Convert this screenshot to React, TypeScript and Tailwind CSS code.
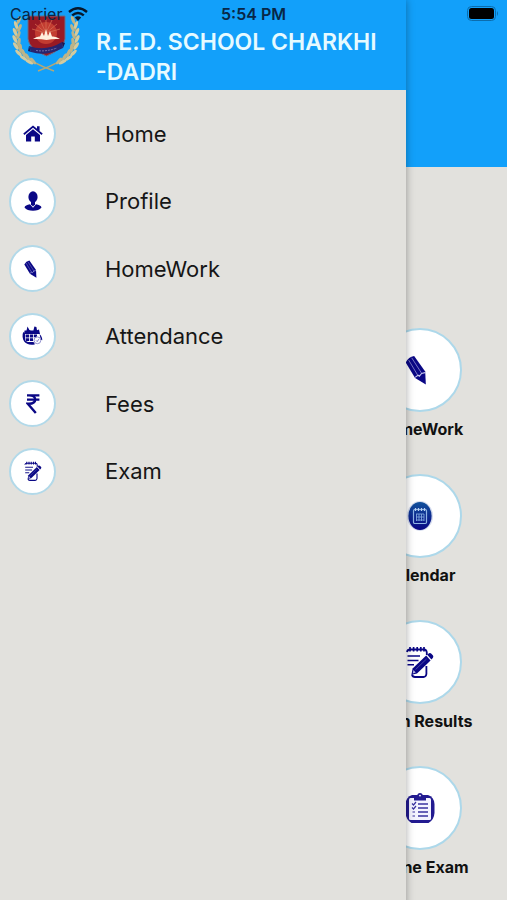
import type { ReactNode } from "react";

const NAVY = "#0a0785";

function HomeIcon() {
  return (
    <svg viewBox="0 0 20 17" className="h-[17px] w-5" fill={NAVY} aria-hidden="true">
      <path d="M10 0.5 L0.3 8.6 L1.4 9.9 L10 2.8 L18.6 9.9 L19.7 8.6 L16.6 6 V1.2 H14 V3.8 Z" />
      <path d="M10 4.2 L3 10 V16.5 H8.2 V11.5 H11.8 V16.5 H17 V10 Z" />
    </svg>
  );
}

function ProfileIcon() {
  return (
    <svg viewBox="0 0 18 20" className="h-5 w-[18px]" fill={NAVY} aria-hidden="true">
      <ellipse cx="9" cy="6" rx="4.6" ry="5.8" />
      <path d="M7 10 H11 V13.4 L9 15.4 L7 13.4 Z" />
      <path d="M6 13.3 L9 16.7 L12 13.3 C15 14 17.2 14.8 17.5 16.6 C15.8 18.8 12.8 19.8 9 19.8 C5.2 19.8 2.2 18.8 0.5 16.6 C0.8 14.8 3 14 6 13.3 Z" />
    </svg>
  );
}

function PencilIcon({ className }: { className: string }) {
  return (
    <svg viewBox="0 0 22 32" className={className} aria-hidden="true">
      <path d="M0 8 Q3 2 9 1 L20.8 17.6 L21.5 31.5 L10 24.6 Z" fill={NAVY} />
      <path d="M3.2 5.4 L13.2 22.2 M6.4 3 L17.2 19.8" stroke="#8c8ace" strokeWidth="0.9" />
      <path d="M10 23.8 L13.2 21.6 L14.6 22.6 L17 19.6 L20.6 18.8" stroke="#c8c8ee" strokeWidth="1.1" fill="none" />
    </svg>
  );
}

function AttendanceIcon() {
  return (
    <svg viewBox="0 0 21 20" className="h-5 w-[21px]" fill={NAVY} aria-hidden="true">
      <path d="M2.6 4.4 L4.5 4.5 L5.5 0.6 L7.4 4 L9 4.5 L11.4 4.4 L12.4 0.4 L14.4 1 L15 4.3 L17 3.4 L18 8 H2 Z" />
      <path d="M1.2 6 L3 7.5 V14.5 L6 16 H11.5 L13 18.3 C8.5 19.8 4 18 2.2 15.5 C0.2 12.6 0.2 9 1.2 6 Z" />
      <path d="M3.6 8.6 H7 V11.4 H3.6 Z M7.8 8.6 H11 V11.4 H7.8 Z M11.8 8.6 H15 V10.5 L11.8 11.4 Z M3.6 12.2 H7 V15 H3.6 Z M7.8 12.2 H11 V15 H7.8 Z" />
      <path d="M17.5 8 C19.5 10 20.3 12 20.3 14.3 L18.8 13.5 Z" />
      <circle cx="15.4" cy="14.3" r="3.4" fill="#fff" stroke="#8f8dcc" strokeWidth="1" />
      <path d="M14 14.4 L15.2 15.6 L16.8 13.2" fill="none" stroke="#6f6dbd" strokeWidth="0.9" />
    </svg>
  );
}

function RupeeIcon() {
  return (
    <svg viewBox="0 0 14 20" className="h-5 w-3.5" fill="none" stroke={NAVY} strokeWidth="2.4" aria-hidden="true">
      <path d="M1 1.4 H13.4 M1 5.6 H13.4 M3 1.4 C11.4 1.4 11.4 9.8 3 9.8 H1.8 L9.8 19" />
    </svg>
  );
}

function NotepadIcon({ className }: { className: string }) {
  return (
    <svg viewBox="0 0 28 32" className={className} fill="none" stroke={NAVY} aria-hidden="true">
      <path d="M1 6 Q1.5 3.5 4 3.5 H18 Q20.5 3.5 20.8 6.5 V9" strokeWidth="1.8" />
      <path d="M4 1 V5.4 M7.6 1 V5.4 M11.2 1 V5.4 M14.8 1 V5.4 M18 1 V5.4" strokeWidth="1.7" />
      <path d="M1.5 10 H14 M1.5 14.4 H12.5 M1.5 18.8 H8" strokeWidth="1.5" />
      <path d="M20.4 20 V28 Q20 31 17.5 31 H9 Q6.5 31 6 28.5" strokeWidth="1.8" />
      <path d="M5.4 28.8 L6.6 22.6 L20.2 9.6 L24.6 14.4 L11 27.4 Z" fill={NAVY} stroke="none" />
      <path d="M21.2 8.8 L23 7.2 Q24.4 6.6 25.4 7.8 L27 9.6 Q27.8 10.8 26.8 12 L25.4 13.4 Z" fill={NAVY} stroke="none" />
      <path d="M7.4 24 L9.8 26.6 L6.8 27.6 Z" fill="#b5b4e2" stroke="none" />
      <path d="M9.5 23.6 L20.5 13" stroke="#5856b3" strokeWidth="0.8" />
    </svg>
  );
}

function CalendarIcon() {
  return (
    <svg viewBox="0 0 28 32" className="h-8 w-7" fill="none" aria-hidden="true">
      <defs>
        <linearGradient id="calendarDisc" x1="0" y1="0" x2="0" y2="1">
          <stop offset="0" stopColor="#11519b" />
          <stop offset="1" stopColor="#0a0785" />
        </linearGradient>
      </defs>
      <ellipse cx="14" cy="16" rx="13" ry="15" fill="#d5dcee" />
      <ellipse cx="14" cy="16" rx="11.6" ry="14" fill="url(#calendarDisc)" />
      <rect x="7.5" y="9.5" width="13" height="14" rx="1.2" stroke="#8fb4e4" strokeWidth="1.2" />
      <path d="M9.5 8 V11 M12.5 8 V11 M15.5 8 V11 M18.5 8 V11" stroke="#b8d0f0" strokeWidth="1.3" />
      <path d="M10 14 H18 M10 17 H18 M10 20 H18 M10.5 14 V21 M13 14 V21 M15.5 14 V21 M18 14 V21" stroke="#7ea6de" strokeWidth="0.9" />
    </svg>
  );
}

function ClipboardIcon() {
  return (
    <svg viewBox="0 0 30 32" className="h-8 w-[30px]" aria-hidden="true">
      <path d="M7 3 H23 Q29 5 29.5 12 V21 Q29 28 23.5 31 H6.5 Q1 28 0.5 21 V12 Q1 5 7 3 Z" fill="#231b91" />
      <rect x="4" y="6" width="22" height="22" rx="1.5" fill="#f3f3ff" />
      <path d="M9 8.5 V4 H12 Q12.5 1 15 1 Q17.5 1 18 4 H21 V8.5 Z" fill="#231b91" />
      <circle cx="15" cy="3.6" r="0.9" fill="#fff" />
      <path d="M13 12 H23 M13 16 H23 M13 20 H23 M13 24 H23" stroke="#3a33a0" strokeWidth="1.3" />
      <path d="M7 11.5 L8.5 13 L11 10 M7 15.5 L8.5 17 L11 14 M7.5 20 H10 M7.5 24 H10" fill="none" stroke="#3a33a0" strokeWidth="1.2" />
    </svg>
  );
}

function Leaf({ x, y, turn, fill }: { x: number; y: number; turn: number; fill: string }) {
  return <ellipse cx={x} cy={y} rx="1.6" ry="4.2" fill={fill} transform={`rotate(${turn} ${x} ${y})`} />;
}

const laurel = [
  [8, 9, 20], [5, 14, -18], [8.5, 17, 24], [4, 21, -22], [7.5, 24, 18],
  [3.8, 28, -26], [8, 31, 8], [4.8, 35, -34], [9.5, 37, -4], [7.5, 42, -46],
  [12.5, 42, -18], [12.5, 47, -56], [16.5, 46, -30], [18.5, 51, -66], [22, 50, -42],
];

function LaurelBranch() {
  return (
    <g>
      <path d="M8 6 Q1 28 10 41 Q20 52 43 60" fill="none" stroke="#b3a876" strokeWidth="1.6" />
      {laurel.map(([x, y, turn], i) => (
        <Leaf key={i} x={x} y={y} turn={turn} fill={i % 2 ? "#d3cb9f" : "#bdb488"} />
      ))}
    </g>
  );
}

function SchoolCrest() {
  return (
    <svg viewBox="0 0 70 68" className="h-[68px] w-[70px] shrink-0" role="img" aria-label="School crest">
      <LaurelBranch />
      <g transform="translate(70 0) scale(-1 1)">
        <LaurelBranch />
      </g>
      <path d="M17 5 H54 V28 Q53 38 35.500 45 Q18 38 17 28 Z" fill="#981a24" stroke="#65708e" strokeWidth="1" />
      <circle cx="35" cy="22" r="11" fill="#c33c31" />
      <path
        d="M35 22 V8 M35 22 L29 9 M35 22 L41 9 M35 22 L24 13 M35 22 L46 13 M35 22 L21 18 M35 22 L49 18"
        stroke="#d36a50"
        strokeWidth="0.8"
      />
      <path d="M22 28 Q26 25 29 25.5 L31 21 L33 25 L35 18 L37 25 L39 20 L41 25.5 Q45 25 49 28 Q42 27.5 35.5 29 Q29 27.5 22 28 Z" fill="#ffeedd" />
      <path d="M18 35 Q35 41 51 31 L52 37 Q35 46 20 41 Z" fill="#27246f" />
      <path d="M18 35 L20 41 L17 40 Z M51 31 L54 32 L52 37 Z" fill="#191852" />
      <path d="M25 39.5 Q35 41 46 37" stroke="#7772ac" strokeWidth="1" fill="none" strokeDasharray="2 1" />
    </svg>
  );
}

function StatusBar() {
  return (
    <div className="absolute inset-x-0 top-0 z-20 grid h-7 grid-cols-3 items-center px-2 text-[16px] leading-5 text-[#082747]">
      <div className="flex items-center gap-1.5 pl-0.5">
        <span>Carrier</span>
        <svg viewBox="0 0 20 14" className="h-3.5 w-5" fill="none" stroke="#06182b" strokeWidth="2.4" aria-label="Wi-Fi">
          <path d="M1 5 Q10 -2.5 19 5 M4.2 8.3 Q10 3.5 15.8 8.3" />
          <path d="M6.8 10.6 Q10 8 13.2 10.6 L10 14 Z" fill="#06182b" stroke="none" />
        </svg>
      </div>
      <span className="text-center font-semibold">5:54 PM</span>
      <svg viewBox="0 0 32 16" className="h-4 w-8 justify-self-end" aria-label="Battery full">
        <rect x="0.5" y="0.5" width="28" height="14" rx="4" fill="none" stroke="#0b6cad" />
        <rect x="2" y="2" width="25" height="11" rx="2.5" fill="#000" />
        <path d="M30 5 Q32 7.5 30 10 Z" fill="#0b6cad" />
      </svg>
    </div>
  );
}

const menu: { label: string; icon: ReactNode }[] = [
  { label: "Home", icon: <HomeIcon /> },
  { label: "Profile", icon: <ProfileIcon /> },
  { label: "HomeWork", icon: <PencilIcon className="mr-1 h-[18px] w-[13px]" /> },
  { label: "Attendance", icon: <AttendanceIcon /> },
  { label: "Fees", icon: <RupeeIcon /> },
  { label: "Exam", icon: <NotepadIcon className="h-5 w-5" /> },
];

const tiles: { label: string; icon: ReactNode }[] = [
  { label: "HomeWork", icon: <PencilIcon className="mr-2 h-[30px] w-[22px]" /> },
  { label: "Calendar", icon: <CalendarIcon /> },
  { label: "Exam Results", icon: <NotepadIcon className="h-8 w-8" /> },
  { label: "Online Exam", icon: <ClipboardIcon /> },
];

export default function App() {
  return (
    <div className="relative min-h-screen overflow-hidden bg-[#e2e1dd] font-['Inter','Liberation_Sans',sans-serif]">
      <StatusBar />

      <header className="h-[167px] bg-[#12a0fa]" />
      <main className="flex flex-col items-end pt-[161px]">
        {tiles.map((tile) => (
          <button key={tile.label} type="button" className="flex h-[146px] w-[174px] flex-col items-center gap-[7px]">
            <span className="flex size-[84px] items-center justify-center rounded-full border-2 border-[#add8ea] bg-white">
              {tile.icon}
            </span>
            <span className="text-[16px] leading-5 font-bold text-[#111]">{tile.label}</span>
          </button>
        ))}
      </main>

      <aside className="absolute inset-y-0 left-0 z-10 w-4/5 bg-[#e2e1dd] shadow-[0_0_8px_rgba(0,0,0,0.35)]">
        <div className="flex h-[90px] items-start gap-[15px] bg-[#12a0fa] pt-[11px] pl-[11px]">
          <SchoolCrest />
          <h1 className="pt-4 text-[23px] leading-[30px] font-semibold whitespace-nowrap text-[#e6faff]">
            R.E.D. SCHOOL CHARKHI
            <br />
            -DADRI
          </h1>
        </div>
        <nav className="grid h-[415px] grid-rows-6 pt-[10px]">
          {menu.map((item) => (
            <button key={item.label} type="button" className="flex items-center gap-[49px] pl-[9px] text-left">
              <span className="flex size-[47px] items-center justify-center rounded-full border-2 border-[#b2d9e9] bg-white">
                {item.icon}
              </span>
              <span className="text-[22px] leading-7 text-[#161616]">{item.label}</span>
            </button>
          ))}
        </nav>
      </aside>
    </div>
  );
}
